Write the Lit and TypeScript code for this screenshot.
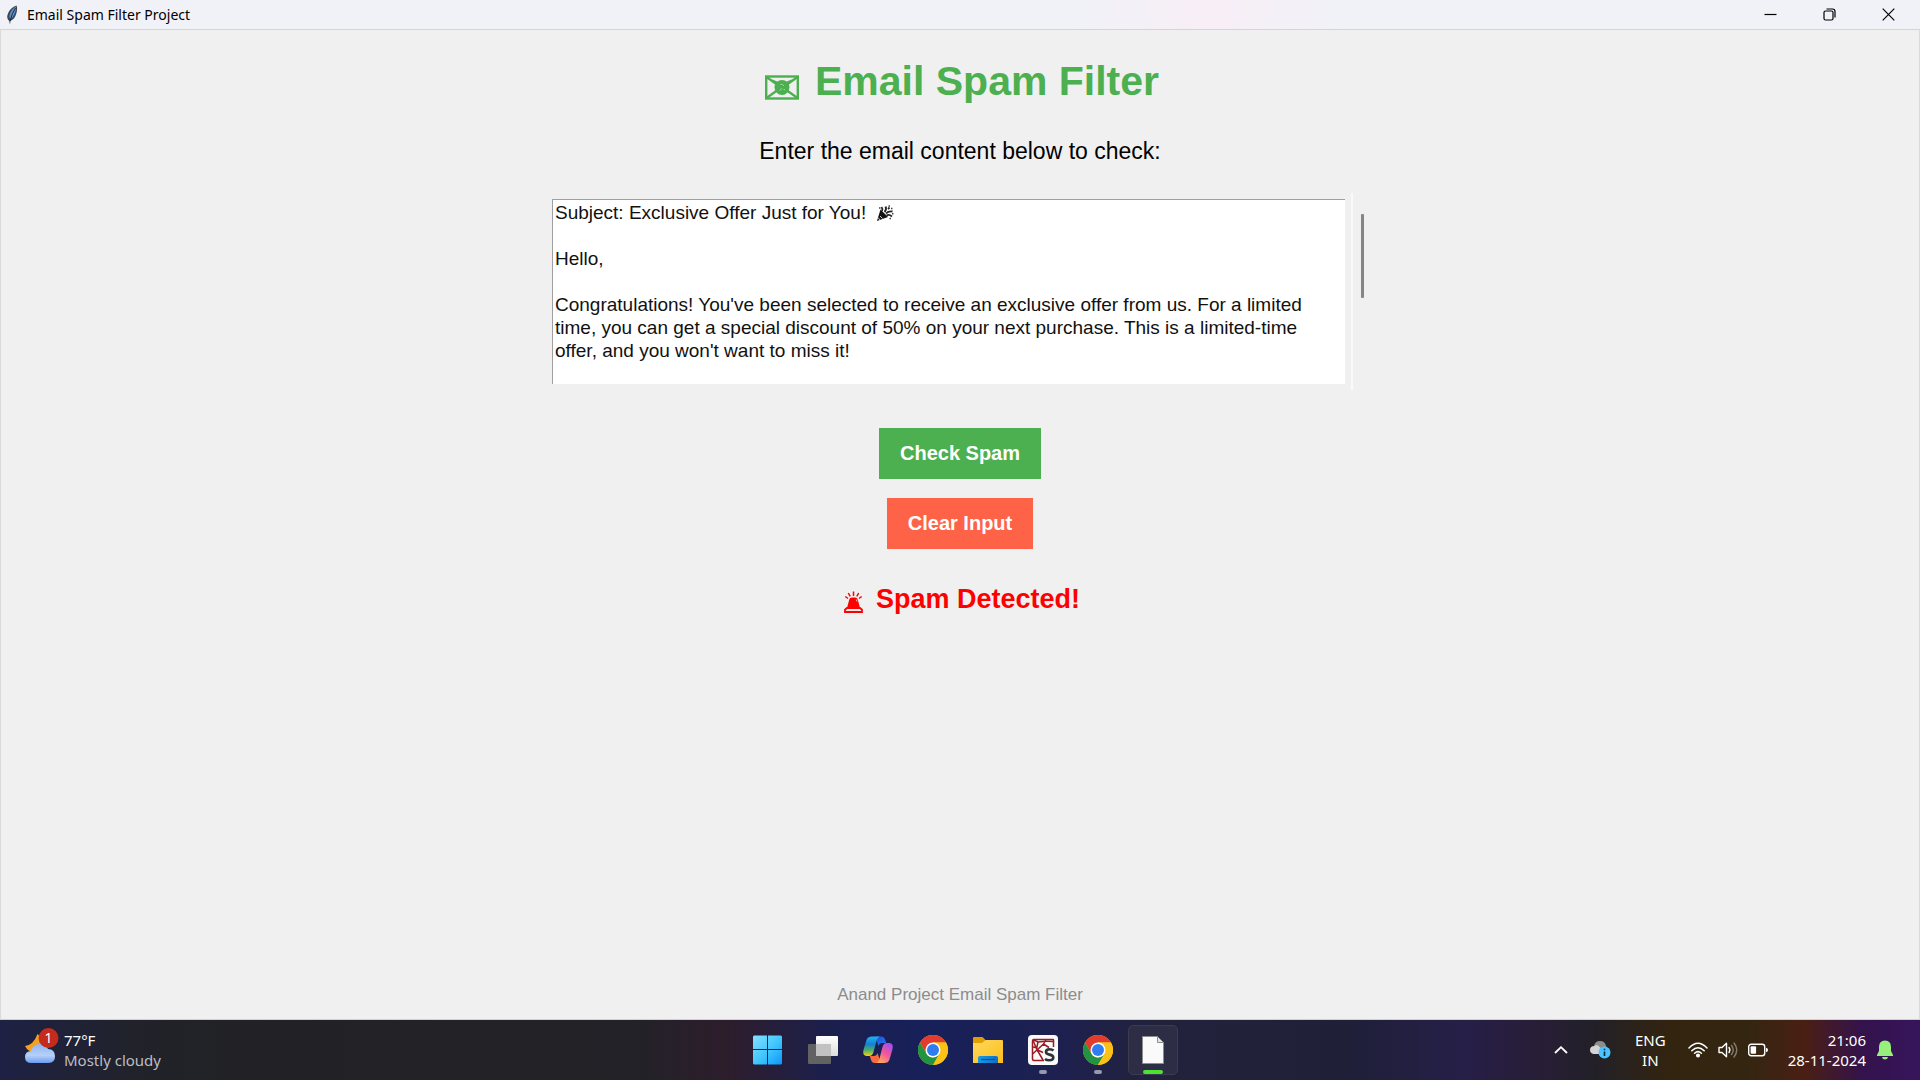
import { LitElement, html, css } from "lit";
import { customElement, property, state } from "lit/decorators.js";

const SAMPLE_MAIL = `Subject: Exclusive Offer Just for You!

Hello,

Congratulations! You've been selected to receive an exclusive offer from us. For a limited time, you can get a special discount of 50% on your next purchase. This is a limited-time offer, and you won't want to miss it!
`;

const chromeIcon = () => html`
  <svg viewBox="0 0 30 30" width="30" height="30" aria-hidden="true">
    <circle cx="15" cy="15" r="15" fill="#fbc116" />
    <path d="M2 7.500A15 15 0 0 1 28 7.500H15L8.500 18.750Z" fill="#e33b2e" />
    <path d="M2 7.500L8.500 18.750Q11 22.500 15 22.500L21.500 18.700L15 30A15 15 0 0 1 2 7.500Z" fill="#229342" />
    <path d="M28 7.500H15V15L21.500 18.750L15 30A15 15 0 0 0 28 7.500Z" fill="#fbc116" />
    <circle cx="15" cy="15" r="7.500" fill="#fff" />
    <circle cx="15" cy="15" r="6" fill="#2f7df0" />
  </svg>`;

const startIcon = () => html`
  <svg viewBox="0 0 30 30" width="30" height="30" aria-hidden="true">
    <defs>
      <linearGradient id="win" x1="0" y1="0" x2="30" y2="30" gradientUnits="userSpaceOnUse">
        <stop offset="0" stop-color="#86e2ff" />
        <stop offset="0.550" stop-color="#3cc4fd" />
        <stop offset="1" stop-color="#0a94fa" />
      </linearGradient>
    </defs>
    <path d="M1 .5H14V14H0V1.500ZM15 .5H28L29 1.500V14H15ZM0 15H14V29.500H1L0 28.500ZM15 15H29V28.500L28 29.500H15Z" fill="url(#win)" />
  </svg>`;

const taskViewIcon = () => html`
  <svg viewBox="0 0 30 30" width="30" height="30" aria-hidden="true">
    <defs>
      <linearGradient id="tv" x1="0" y1="0" x2="0" y2="1">
        <stop offset="0" stop-color="#fff" />
        <stop offset="1" stop-color="#dcdcdc" />
      </linearGradient>
    </defs>
    <rect x="8" y="1" width="22" height="20" rx="1" fill="url(#tv)" />
    <rect x="0" y="9" width="23" height="20" rx="1" fill="#626262" />
    <rect x="8" y="9" width="15" height="12" fill="#c2c2c2" />
  </svg>`;

const copilotIcon = () => html`
  <svg viewBox="0 0 30 30" width="30" height="30" aria-hidden="true">
    <defs>
      <linearGradient id="cp1" x1="0" y1="0" x2="0" y2="1">
        <stop offset="0" stop-color="#1db4f4" />
        <stop offset="0.400" stop-color="#1681cf" />
        <stop offset="0.700" stop-color="#4fae6a" />
        <stop offset="1" stop-color="#f4d40c" />
      </linearGradient>
      <linearGradient id="cp2" x1="0.800" y1="0" x2="0.200" y2="1">
        <stop offset="0" stop-color="#a04df2" />
        <stop offset="0.500" stop-color="#f2589a" />
        <stop offset="1" stop-color="#ffb05a" />
      </linearGradient>
      <linearGradient id="cp3" x1="0" y1="0" x2="1" y2="1">
        <stop offset="0" stop-color="#1d4fd8" />
        <stop offset="1" stop-color="#1f7af0" />
      </linearGradient>
    </defs>
    <path d="M12 1.500H18.500Q21 1.500 22 4.500L23.200 8H19Q16.500 8 15.500 11Z" fill="url(#cp3)" />
    <path d="M18 28H11.500Q9 28 8 25L6.800 21H11Q13.500 21 14.500 18Z" fill="#fb6a3c" />
    <path d="M9 1.500H17Q14.500 2 13.500 6L10.500 17Q9.500 21 6 21H4Q-1 21 .6 14.500L3.500 5Q4.500 1.500 9 1.500Z" fill="url(#cp1)" />
    <path d="M21 28H13Q15.500 27.500 16.500 23.500L19.500 12Q20.500 8 24 8H26Q31 8 29.400 14.500L26.500 24.500Q25.500 28 21 28Z" fill="url(#cp2)" />
  </svg>`;

const folderIcon = () => html`
  <svg viewBox="0 0 30 30" width="30" height="30" aria-hidden="true">
    <defs>
      <linearGradient id="fd" x1="0" y1="0" x2="1" y2="1">
        <stop offset="0" stop-color="#ffd95c" />
        <stop offset="1" stop-color="#fbbd1c" />
      </linearGradient>
      <linearGradient id="fb" x1="0" y1="0" x2="1" y2="0">
        <stop offset="0" stop-color="#1a9be6" />
        <stop offset="1" stop-color="#0c6fc6" />
      </linearGradient>
    </defs>
    <path d="M0 3Q0 2 1 2H9.500L12.500 5H0Z" fill="#e09d00" />
    <path d="M0 5H12V8H0Z" fill="#e0a000" />
    <path d="M0 8H9L12.500 5H29Q30 5 30 6V28H0Z" fill="url(#fd)" />
    <path d="M5 28V23Q5 21 7 21H23Q25 21 25 23V28Z" fill="url(#fb)" />
    <path d="M8 24.500H22" stroke="#0a529c" stroke-width="1.200" />
  </svg>`;

const ksIcon = () => html`
  <svg viewBox="0 0 30 30" width="30" height="30" aria-hidden="true">
    <rect width="30" height="30" rx="4" fill="#fafafa" />
    <g fill="none" stroke="#9a1b22" stroke-width="1.500">
      <path d="M25.500 12V5Q25.500 4.500 25 4.500H6Q4.500 4.500 4.500 6V24Q4.500 25.500 6 25.500H16" />
      <path d="M5 5L8.500 14L15 25M5 4.500L10 7Q17 6 25.500 6.500M4.500 19L9 15L15.500 9L18 4.500M5 12L8 12.500M8.500 14.500L15 17.500M15.500 9L21 12.500M10 7L8.500 14" />
    </g>
    <path d="M25.500 15.500Q24 14.200 21.500 14.200Q18 14.200 18 17Q18 19 21.500 19.600Q25.300 20.300 25.300 22.500Q25.300 25.300 21.200 25.300Q18.500 25.300 17 24" fill="none" stroke="#2d3238" stroke-width="2.600" />
  </svg>`;

const fileIcon = () => html`
  <svg viewBox="0 0 30 30" width="30" height="30" aria-hidden="true">
    <path d="M4.500 1.500H19.500L25.500 7.500V28.500H4.500Z" fill="#fafafa" stroke="#8d8d8d" />
    <path d="M19.500 1.500V7.500H25.500Z" fill="#e4e4e4" stroke="#8d8d8d" />
  </svg>`;

interface TaskApp {
  name: string;
  icon: () => unknown;
  status: "" | "running" | "active";
}

const APPS: TaskApp[] = [
  { name: "Start", icon: startIcon, status: "" },
  { name: "Task View", icon: taskViewIcon, status: "" },
  { name: "Copilot", icon: copilotIcon, status: "" },
  { name: "Google Chrome", icon: chromeIcon, status: "" },
  { name: "File Explorer", icon: folderIcon, status: "" },
  { name: "Spyder", icon: ksIcon, status: "running" },
  { name: "Google Chrome window", icon: chromeIcon, status: "running" },
  { name: "Email Spam Filter Project", icon: fileIcon, status: "active" },
];

@customElement("title-bar")
class TitleBar extends LitElement {
  @property() caption = "";

  static styles = css`
    :host {
      display: flex;
      align-items: center;
      justify-content: space-between;
      height: 29px;
      border-bottom: 1px solid #d4d4d6;
      background: linear-gradient(90deg, #f1f2f8 0%, #f1f2f8 56%, #f8eef6 63%, #f1f2f8 70%, #f1f2f8 100%);
      color: #000;
      font: 14px/20px "Noto Sans", "Open Sans", sans-serif;
    }
    .name {
      display: flex;
      align-items: center;
      gap: 9px;
      padding-left: 6px;
    }
    .name svg,
    button svg {
      display: block;
    }
    .controls {
      display: flex;
      height: 100%;
      padding-right: 2px;
    }
    button {
      display: flex;
      align-items: center;
      justify-content: center;
      width: 59px;
      padding: 0;
      border: 0;
      background: none;
      color: #000;
    }
  `;

  render() {
    return html`
      <div class="name">
        <svg viewBox="0 0 12 20" width="12" height="20" aria-hidden="true">
          <path d="M10.500 .6Q12 4 10 9.500Q8.500 14 4.500 16L4 19.500L3.200 16Q0 13 2 8.500Q4.500 2.500 10.500 .6Z" fill="#3c4650" />
          <path d="M10 1.500Q10.500 5 8.500 9Q7 12.500 4.500 14Q2.500 12 4 8.500Q6 3.500 10 1.500Z" fill="#5a8fd0" />
          <path d="M9.500 3Q6 8 4 16" fill="none" stroke="#1c2c40" stroke-width="1" />
        </svg>
        <span>${this.caption}</span>
      </div>
      <div class="controls">
        <button aria-label="Minimise">
          <svg viewBox="0 0 13 13" width="13" height="13"><path d="M.5 6.500H12.500" stroke="currentColor" stroke-width="1.200" /></svg>
        </button>
        <button aria-label="Restore">
          <svg viewBox="0 0 13 13" width="13" height="13" fill="none" stroke="currentColor" stroke-width="1.200">
            <rect x="1" y="3" width="9" height="9" rx="1.500" />
            <path d="M3.500 1H9.500Q12 1 12 3.500V9.500" />
          </svg>
        </button>
        <button aria-label="Close">
          <svg viewBox="0 0 13 13" width="13" height="13"><path d="M.7 .7L12.300 12.300M12.300 .7L.7 12.300" stroke="currentColor" stroke-width="1.200" /></svg>
        </button>
      </div>
    `;
  }
}

@customElement("spam-form")
class SpamForm extends LitElement {
  @state() private mail = SAMPLE_MAIL;
  @state() private verdict = "Spam Detected!";

  static styles = css`
    :host {
      display: flex;
      flex-direction: column;
      align-items: center;
      box-sizing: border-box;
      padding: 28px 0 12px;
      border-left: 1px solid #dadada;
      border-right: 1px solid #dadada;
      border-bottom: 1px solid #d0d0d0;
      background: #f0f0f0;
      color: #000;
      font-family: "Liberation Sans", Arial, sans-serif;
    }
    h1 {
      display: flex;
      align-items: center;
      gap: 16px;
      margin: 0;
      padding-left: 4px;
      color: #4caf50;
      font-size: 41px;
      line-height: 46px;
    }
    h1 svg {
      margin-top: 12px;
    }
    label {
      margin-top: 33px;
      font-size: 23px;
      line-height: 28px;
    }
    .scrolled {
      display: flex;
      margin-top: 28px;
    }
    .field {
      position: relative;
      display: flex;
      margin: 6px 6px 6px 5px;
    }
    textarea {
      box-sizing: border-box;
      width: 793px;
      max-width: 90vw;
      height: 185px;
      padding: 1px 12px 0 2px;
      border: 0 solid #a0a0a0;
      border-top-width: 1px;
      border-left-width: 1px;
      border-radius: 0;
      outline: 0;
      resize: none;
      scrollbar-width: none;
      background: #fff;
      color: #111;
      font: 19px/23px "Liberation Sans", Arial, sans-serif;
    }
    .popper {
      position: absolute;
      left: 324px;
      top: 6px;
    }
    .track {
      box-sizing: border-box;
      width: 22px;
      padding: 21px 0 0 8px;
      border-left: 2px solid #fafafa;
    }
    .thumb {
      width: 3px;
      height: 84px;
      border-radius: 1px;
      background: #858585;
    }
    .actions {
      display: flex;
      flex-direction: column;
      align-items: center;
      gap: 19px;
      margin-top: 38px;
    }
    button {
      padding: 14px 21px;
      border: 0;
      color: #fff;
      font: bold 20px/23px "Liberation Sans", Arial, sans-serif;
    }
    .check {
      background: #4caf50;
    }
    .clear {
      background: #ff6347;
    }
    .verdict {
      display: flex;
      align-items: center;
      gap: 13px;
      margin-top: 35px;
      padding-left: 4px;
      color: #f00;
      font-size: 27px;
      font-weight: bold;
      line-height: 30px;
    }
    .verdict svg {
      margin-top: 6px;
    }
    footer {
      margin-top: auto;
      color: #8c8c8c;
      font-size: 17px;
      line-height: 24px;
    }
  `;

  private clear() {
    this.mail = "";
    this.verdict = "";
  }

  private check() {
    this.verdict = /offer|discount|congratulations/i.test(this.mail) ? "Spam Detected!" : "";
  }

  render() {
    return html`
      <h1>
        <svg viewBox="0 0 34 25" width="34" height="25" fill="none" stroke="currentColor" aria-hidden="true">
          <rect x="1.200" y="1.500" width="31.600" height="22" stroke-width="2.400" />
          <path d="M1.500 2L12 9.500M32.500 2L22 9.500M1.500 23L12 15.500M32.500 23L22 15.500M7 5.500L13 8M27 5.500L21 8" stroke-width="2.200" />
          <circle cx="17" cy="12.500" r="7.500" fill="currentColor" stroke="none" />
          <path d="M15.500 9.500H17.500L19 11M14.500 15.500L17 13.500M18.500 14.500H20" stroke="#9fd3a1" stroke-width="1" />
        </svg>
        Email Spam Filter
      </h1>
      <label for="mail">Enter the email content below to check:</label>
      <div class="scrolled">
        <div class="field">
          <textarea
            id="mail"
            spellcheck="false"
            .value=${this.mail}
            @input=${(e: Event) => (this.mail = (e.target as HTMLTextAreaElement).value)}
          ></textarea>
          ${this.mail.startsWith("Subject")
            ? html`<svg class="popper" viewBox="0 0 18 17" width="18" height="17" aria-hidden="true">
                <path d="M1 16L4.500 4.500L12 12Z" fill="#111" />
                <path d="M4 11L6.500 13.500M2 12.500L4 15" stroke="#ccc" stroke-width="1" />
                <path d="M6 6Q7 4 5.500 2M8.500 7Q11 4.500 9.500 1.500M10 8.500Q12 6 16.500 6.500M10.500 10.500Q13 9 16 11.500M12 4L13.500 2.500" fill="none" stroke="#222" stroke-width="1.800" />
                <path d="M3 3H4.500M12.500 1H14M15 3.500H16.500M13.500 13.500H15M16 8.800H17.500" stroke="#444" stroke-width="1.500" />
              </svg>`
            : ""}
        </div>
        <div class="track"><div class="thumb"></div></div>
      </div>
      <div class="actions">
        <button class="check" @click=${this.check}>Check Spam</button>
        <button class="clear" @click=${this.clear}>Clear Input</button>
      </div>
      ${this.verdict
        ? html`<div class="verdict" role="status">
            <svg viewBox="0 0 19 22" width="19" height="22" aria-hidden="true">
              <path d="M9.500 .5V5M4.300 2L6.200 5.300M14.700 2L12.800 5.300M1.300 5.500L4 7.500M17.700 5.500L15 7.500" fill="none" stroke="currentColor" stroke-width="1.500" />
              <path d="M3 17L5 9.500Q5.500 6.500 8 6.500H11Q13.500 6.500 14 9.500L16 17Z" fill="currentColor" />
              <path d="M12.300 8.500L13 10.500" stroke="#ffc4c4" stroke-width="1" />
              <path d="M3 17H16L18 18.700V21H1V18.700Z" fill="#f0f0f0" stroke="currentColor" stroke-width="1.800" />
            </svg>
            ${this.verdict}
          </div>`
        : ""}
      <footer>Anand Project Email Spam Filter</footer>
    `;
  }
}

@customElement("task-bar")
class TaskBar extends LitElement {
  static styles = css`
    :host {
      display: grid;
      grid-template-columns: 1fr auto 1fr;
      align-items: center;
      height: 60px;
      background: linear-gradient(
        90deg,
        #1e2144 0%,
        #21222a 7%,
        #222226 12%,
        #222228 33%,
        #2d1d2c 38%,
        #1c1f4c 43%,
        #17205a 48%,
        #1d2050 55%,
        #22223c 60%,
        #21213a 66%,
        #1f1f38 70%,
        #261f48 76%,
        #281e38 80%,
        #222028 83%,
        #33240f 87%,
        #332611 91%,
        #4a1f14 94%,
        #34124c 97%,
        #36155c 100%
      );
      color: #fff;
      font: 15px/20px "Noto Sans", "Open Sans", sans-serif;
    }
    button {
      display: flex;
      align-items: center;
      padding: 0;
      border: 0;
      background: none;
      color: inherit;
      font: inherit;
    }
    svg {
      display: block;
    }
    .weather {
      justify-self: start;
      gap: 5px;
      padding-left: 24px;
      text-align: left;
    }
    .weather span,
    .language span,
    .clock span {
      display: block;
    }
    .weather .muted {
      color: #bdbdc2;
    }
    .apps {
      display: flex;
      gap: 5px;
    }
    .app {
      box-sizing: border-box;
      flex-direction: column;
      width: 50px;
      height: 50px;
      padding-top: 9px;
      border: 1px solid transparent;
      border-radius: 5px;
    }
    .app.active {
      border-color: #3b3b50;
      background: #2d2d46;
    }
    .mark {
      width: 8px;
      height: 4px;
      margin-top: 5px;
      border-radius: 2px;
      background: #9897ab;
    }
    .active .mark {
      width: 20px;
      background: #4be234;
    }
    .tray {
      display: flex;
      justify-self: end;
      align-items: center;
      padding-right: 27px;
    }
    .cloud {
      margin-left: 22px;
    }
    .language {
      margin-left: 24px;
      text-align: center;
    }
    .network {
      gap: 10px;
      margin-left: 22px;
    }
    .clock {
      margin-left: 20px;
      text-align: right;
    }
    .bell {
      margin-left: 11px;
    }
  `;

  render() {
    return html`
      <button class="weather">
        <svg viewBox="0 0 35 46" width="35" height="46" aria-hidden="true">
          <defs>
            <linearGradient id="cl" x1="0" y1="0" x2="0" y2="1">
              <stop offset="0" stop-color="#8fb4f4" />
              <stop offset="0.600" stop-color="#b4d0fa" />
              <stop offset="1" stop-color="#6d9cf0" />
            </linearGradient>
          </defs>
          <path d="M13.500 7Q9.500 18 1 19Q4 25 10 25H20V10Q16 10 13.500 7Z" fill="#f5a021" />
          <path d="M7.500 36Q1 36 1 30Q1 24.500 7 24Q9 17 16 17Q22 17 24 22Q31 22 31 29.500Q31 36 24.500 36Z" fill="url(#cl)" />
          <circle cx="24.500" cy="11" r="10" fill="#c42b1c" />
          <text x="24.500" y="16" fill="#fff" font-size="14" text-anchor="middle">1</text>
        </svg>
        <span>
          <span>77°F</span>
          <span class="muted">Mostly cloudy</span>
        </span>
      </button>
      <div class="apps">
        ${APPS.map(
          (app) => html`<button class="app ${app.status}" aria-label=${app.name}>
            ${app.icon()}${app.status ? html`<span class="mark"></span>` : ""}
          </button>`
        )}
      </div>
      <div class="tray">
        <button aria-label="Show hidden icons">
          <svg viewBox="0 0 14 8" width="14" height="8"><path d="M1 7L7 1.200L13 7" fill="none" stroke="currentColor" stroke-width="1.800" /></svg>
        </button>
        <button class="cloud" aria-label="OneDrive">
          <svg viewBox="0 0 21 20" width="21" height="20">
            <path d="M4 6Q5 1 10 1Q15 1 16 6Q18 8 17 12H9Z" fill="#8d8d8d" />
            <path d="M3.500 14Q0 13 0 10Q0 6 4.500 6Q7 3.500 10.500 8L13 14Z" fill="#d4d4d4" />
            <circle cx="14.500" cy="12.500" r="6" fill="#4cc2ff" />
            <path d="M14.500 11.500V16M14.500 8.800V10.300" stroke="#0b2440" stroke-width="1.600" />
          </svg>
        </button>
        <button class="language"><span><span>ENG</span><span>IN</span></span></button>
        <button class="network" aria-label="Network, volume and battery">
          <svg viewBox="0 0 20 16" width="20" height="16" fill="none" stroke="currentColor" stroke-width="1.500" stroke-linecap="round">
            <path d="M1 6Q10 -3.500 19 6M3.800 8.800Q10 2.500 16.200 8.800M6.600 11.300Q10 8 13.400 11.300" />
            <circle cx="10" cy="13.500" r="1.300" fill="currentColor" />
          </svg>
          <svg viewBox="0 0 20 18" width="20" height="18" fill="none" stroke="currentColor" stroke-width="1.400" stroke-linecap="round" stroke-linejoin="round">
            <path d="M1 6.500H4L8.500 2.200V15.800L4 11.500H1Z" />
            <path d="M11 6.500Q12.800 9 11 11.500" />
            <path d="M13.500 4.500Q17 9 13.500 13.500M16 2Q21.500 9 16 16" stroke-opacity="0.400" />
          </svg>
          <svg viewBox="0 0 20 14" width="20" height="14">
            <rect x="0.700" y="1.200" width="16" height="11.600" rx="2.500" fill="none" stroke="currentColor" stroke-width="1.400" />
            <rect x="2.600" y="3.200" width="5.500" height="7.600" rx="1" fill="currentColor" />
            <path d="M18 4.800Q20 5 20 7Q20 9 18 9.200Z" fill="currentColor" />
          </svg>
        </button>
        <button class="clock"><span><span>21:06</span><span>28-11-2024</span></span></button>
        <button class="bell" aria-label="Notifications">
          <svg viewBox="0 0 16 20" width="16" height="20">
            <path d="M8 .5Q14 .5 14 7V11L16 15V16H0V15L2 11V7Q2 .5 8 .5Z" fill="#97f07c" />
            <path d="M5 17H11Q10.500 19.500 8 19.500Q5.500 19.500 5 17Z" fill="#97f07c" />
          </svg>
        </button>
      </div>
    `;
  }
}

@customElement("app-root")
class AppRoot extends LitElement {
  static styles = css`
    :host {
      display: flex;
      flex-direction: column;
      min-height: 100vh;
    }
    spam-form {
      flex: 1;
    }
  `;

  render() {
    return html`
      <title-bar caption="Email Spam Filter Project"></title-bar>
      <spam-form></spam-form>
      <task-bar></task-bar>
    `;
  }
}
